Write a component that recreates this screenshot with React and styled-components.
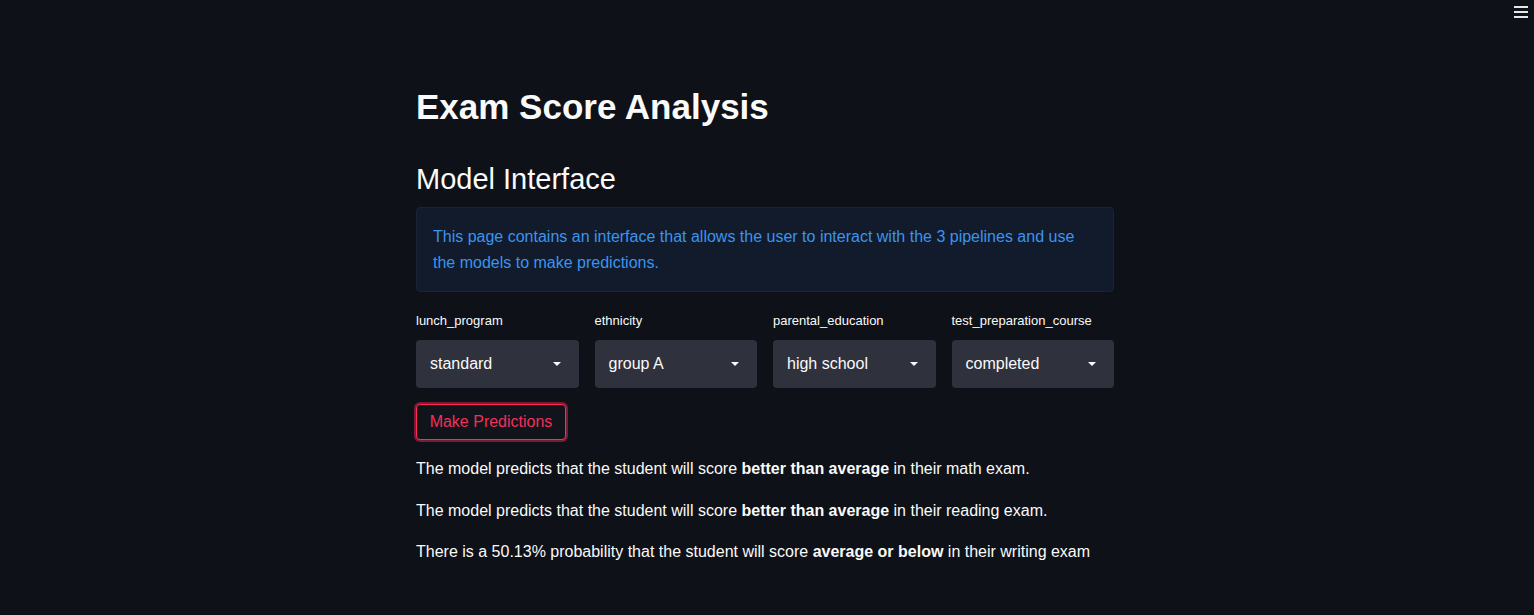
import React from "react";
import styled, { createGlobalStyle } from "styled-components";

const Global = createGlobalStyle`
  html, body { margin: 0; padding: 0; background: #0e1117; }
  body { font-family: "Liberation Sans", Arial, sans-serif; color: #fafafa; }
  * { box-sizing: border-box; }
`;

const Page = styled.div`
  min-height: 615px;
  background: #0e1117;
  position: relative;
  padding: 0 4px 40px 0;
`;

const Menu = styled.div`
  position: absolute;
  top: 6px;
  right: 6px;
  width: 14px;
  display: flex;
  flex-direction: column;
  gap: 3px;
  span { display: block; height: 2px; background: #e6e6e6; }
`;

const Main = styled.main`
  width: 698px;
  margin: 0 auto;
  padding-top: 85px;
  display: flex;
  flex-direction: column;
`;

const Title = styled.h1`
  margin: 0;
  font-size: 35px;
  font-weight: 700;
  line-height: 44px;
  color: #fafafa;
  letter-spacing: 0;
`;

const Subtitle = styled.h2`
  margin: 32px 0 0;
  font-size: 29px;
  font-weight: 400;
  line-height: 36px;
  color: #fafafa;
`;

const Info = styled.div`
  margin-top: 10px;
  background: #111b2b;
  border: 1px solid #172538;
  border-radius: 4px;
  padding: 16px 16px 15px;
  color: #3b94ef;
  font-size: 16px;
  line-height: 26px;
`;

const Columns = styled.div`
  margin-top: 20px;
  display: grid;
  grid-template-columns: repeat(4, 1fr);
  gap: 16px;
`;

const Field = styled.div`
  display: flex;
  flex-direction: column;
`;

const Label = styled.label`
  font-size: 13px;
  line-height: 18px;
  color: #fafafa;
  margin-bottom: 10px;
`;

const Select = styled.div`
  height: 48px;
  background: #2f313d;
  border-radius: 4px;
  display: flex;
  align-items: center;
  justify-content: space-between;
  padding: 0 18px 0 14px;
  font-size: 16px;
  color: #fafafa;
`;

const Caret = styled.span`
  width: 0;
  height: 0;
  border-left: 4px solid transparent;
  border-right: 4px solid transparent;
  border-top: 4px solid #fafafa;
`;

const Button = styled.button`
  margin-top: 16px;
  align-self: flex-start;
  height: 36px;
  width: 150px;
  padding: 0 12px;
  background: #11141b;
  border: 1px solid #ff2b55;
  border-radius: 4px;
  box-shadow: 0 0 0 2px rgba(214, 38, 80, 0.55);
  color: #f0305a;
  font-family: "Liberation Sans", Arial, sans-serif;
  font-size: 16px;
`;

const Results = styled.div`
  margin-top: 16px;
  display: flex;
  flex-direction: column;
  gap: 16px;
`;

const Para = styled.p`
  margin: 0;
  font-size: 16px;
  line-height: 25.6px;
  color: #fafafa;
  b { font-weight: 700; }
`;

const fields = [
  ["lunch_program", "standard"],
  ["ethnicity", "group A"],
  ["parental_education", "high school"],
  ["test_preparation_course", "completed"],
];

export default function App() {
  return (
    <Page>
      <Global />
      <Menu>
        <span />
        <span />
        <span />
      </Menu>
      <Main>
        <Title>Exam Score Analysis</Title>
        <Subtitle>Model Interface</Subtitle>
        <Info>
          This page contains an interface that allows the user to interact with the 3 pipelines and use
          the models to make predictions.
        </Info>
        <Columns>
          {fields.map(([label, value]) => (
            <Field key={label}>
              <Label>{label}</Label>
              <Select>
                {value}
                <Caret />
              </Select>
            </Field>
          ))}
        </Columns>
        <Button>Make Predictions</Button>
        <Results>
          <Para>
            The model predicts that the student will score <b>better than average</b> in their math exam.
          </Para>
          <Para>
            The model predicts that the student will score <b>better than average</b> in their reading exam.
          </Para>
          <Para>
            There is a 50.13% probability that the student will score <b>average or below</b> in their writing exam
          </Para>
        </Results>
      </Main>
    </Page>
  );
}
